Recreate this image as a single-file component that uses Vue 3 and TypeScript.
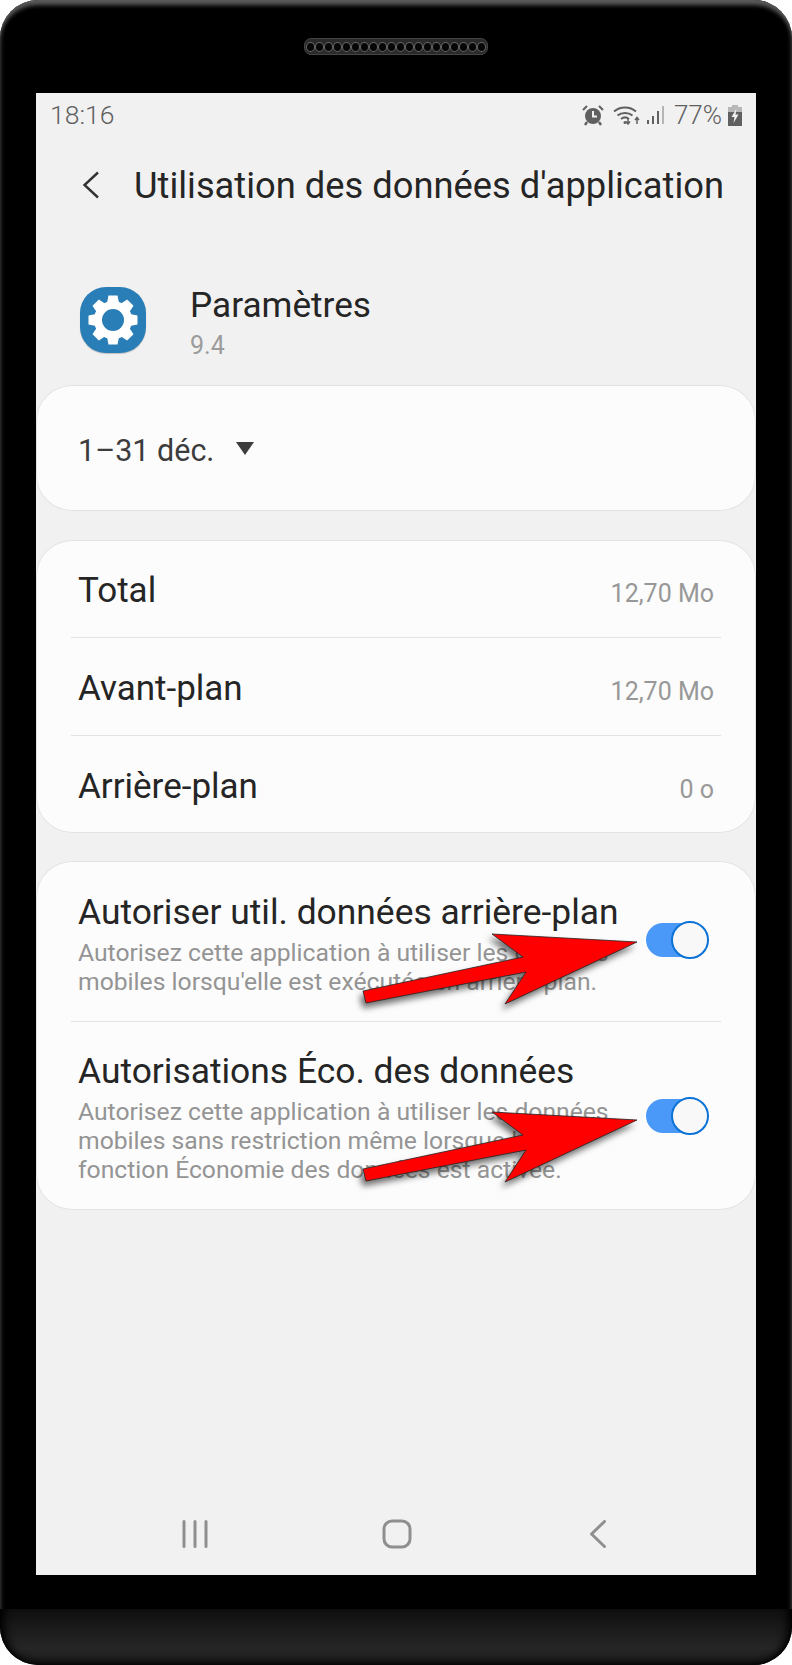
<template>
  <div class="phone">
    <div class="bezel-top">
      <div class="speaker">
        <span v-for="n in 20" :key="n" class="hole"></span>
      </div>
    </div>

    <div class="screen">
      <div class="status-bar">
        <span class="time">18:16</span>
        <div class="status-right">
          <svg class="alarm" width="22" height="21" viewBox="0 0 22 21">
            <circle cx="11" cy="11" r="8" fill="#606060" />
            <path d="M11 6v5.5h4" fill="none" stroke="#f1f1f1" stroke-width="2" />
            <path d="M1 5l4-4M21 5l-4-4" stroke="#606060" stroke-width="2" fill="none" />
            <path d="M5 17l-2 3M17 17l2 3" stroke="#606060" stroke-width="2.4" fill="none" />
          </svg>
          <svg class="wifi" width="28" height="20" viewBox="0 0 28 20">
            <path d="M1 6.5C7 1 17 1 23 6.5M4.5 10.5c4-3.5 11-3.5 15 0M8 14c2.500-2 5.500-2 8 0" fill="none" stroke="#606060" stroke-width="2" />
            <path d="M15 13.500v5M13 16.500l2 2.500 2-2.500" fill="none" stroke="#606060" stroke-width="1.500" />
            <path d="M24 19v-6M22 15l2-2.500 2 2.500" fill="none" stroke="#606060" stroke-width="1.500" />
            <circle cx="12" cy="17.500" r="1.500" fill="#606060" />
          </svg>
          <svg class="signal" width="18" height="20" viewBox="0 0 18 20">
            <rect x="0" y="15" width="2" height="4" fill="#606060" />
            <rect x="5" y="11" width="2" height="8" fill="#606060" />
            <rect x="10" y="6" width="2" height="13" fill="#606060" />
            <rect x="15" y="1" width="2" height="18" fill="#b5b5b5" />
          </svg>
          <span class="battery-text">77%</span>
          <svg class="battery" width="14" height="21" viewBox="0 0 14 21">
            <rect x="4" y="0" width="6" height="3" fill="#b8b8b8" />
            <rect x="0" y="2" width="14" height="5" fill="#b8b8b8" />
            <rect x="0" y="7" width="14" height="14" fill="#606060" />
            <path d="M8.500 3.500L3.500 12h3l-1 6 5-8.500h-3z" fill="#f1f1f1" />
          </svg>
        </div>
      </div>

      <header class="title-bar">
        <svg class="back" width="18" height="28" viewBox="0 0 18 28">
          <path d="M16 1.500L2.500 14 16 26.500" fill="none" stroke="#333" stroke-width="2.400" />
        </svg>
        <h1>Utilisation des données d'application</h1>
      </header>

      <section class="app-info">
        <div class="app-icon">
          <svg width="58" height="58" viewBox="-29 -29 58 58">
            <path
              v-for="a in toothAngles"
              :key="a"
              d="M-6-17L-4.500-24.500H4.500L6-17Z"
              fill="#fff"
              :transform="`rotate(${a})`"
            />
            <circle r="15" fill="none" stroke="#fff" stroke-width="8" />
          </svg>
        </div>
        <div class="app-text">
          <div class="app-name">Paramètres</div>
          <div class="app-version">9.4</div>
        </div>
      </section>

      <section class="card period">
        <span>1–31 déc.</span>
        <i class="caret"></i>
      </section>

      <section class="card usage">
        <div v-for="row in usageRows" :key="row.label" class="usage-row">
          <span class="usage-label">{{ row.label }}</span>
          <span class="usage-value">{{ row.value }}</span>
        </div>
      </section>

      <section class="card toggles">
        <div v-for="row in toggleRows" :key="row.title" class="toggle-row">
          <div class="toggle-text">
            <div class="toggle-title">{{ row.title }}</div>
            <p>{{ row.desc }}</p>
          </div>
          <div class="switch"><span class="knob"></span></div>
          <!-- annotation drawn over the row -->
          <svg class="arrow" width="300" height="90" viewBox="0 0 300 90">
            <polygon points="282,10 137,2 168,25 8,59 11,71 171,40 150,72" fill="#ff0000" stroke="#222" stroke-width="0.800" stroke-linejoin="round" />
          </svg>
        </div>
      </section>

      <nav class="nav-bar">
        <svg width="26" height="28" viewBox="0 0 26 28">
          <path d="M2 1.500v25M13 1.500v25M24 1.500v25" stroke="#8f8f8f" stroke-width="3" stroke-linecap="round" />
        </svg>
        <svg width="30" height="30" viewBox="0 0 30 30">
          <rect x="2" y="2" width="26" height="26" rx="8" fill="none" stroke="#8f8f8f" stroke-width="3" />
        </svg>
        <svg width="18" height="28" viewBox="0 0 18 28">
          <path d="M15.500 1.500L2.500 14l13 12.500" fill="none" stroke="#8f8f8f" stroke-width="3" stroke-linecap="round" stroke-linejoin="round" />
        </svg>
      </nav>
    </div>

    <div class="bezel-gap"></div>
    <div class="chin"></div>
  </div>
</template>

<script setup lang="ts">
interface UsageRow {
  label: string
  value: string
}

interface ToggleRow {
  title: string
  desc: string
}

const toothAngles: number[] = [0, 45, 90, 135, 180, 225, 270, 315]

const usageRows: UsageRow[] = [
  { label: 'Total', value: '12,70 Mo' },
  { label: 'Avant-plan', value: '12,70 Mo' },
  { label: 'Arrière-plan', value: '0 o' },
]

const toggleRows: ToggleRow[] = [
  {
    title: 'Autoriser util. données arrière-plan',
    desc: "Autorisez cette application à utiliser les données mobiles lorsqu'elle est exécutée en arrière-plan.",
  },
  {
    title: 'Autorisations Éco. des données',
    desc: 'Autorisez cette application à utiliser les données mobiles sans restriction même lorsque la fonction Économie des données est activée.',
  },
]
</script>

<style>
html,
body {
  margin: 0;
  background: #fff;
}
</style>

<style scoped>
.phone {
  width: 792px;
  height: 1665px;
  box-sizing: border-box;
  display: flex;
  flex-direction: column;
  align-items: stretch;
  background: #000;
  border-radius: 38px 38px 38px 38px;
  box-shadow: inset 0 7px 4px -2px #5a5a5a, inset 3px 0 4px -2px #333, inset -3px 0 4px -2px #333;
  overflow: hidden;
  font-family: Roboto, "Noto Sans", sans-serif;
}

.bezel-top {
  height: 93px;
  padding-top: 38px;
  box-sizing: border-box;
  display: flex;
  justify-content: center;
  align-items: flex-start;
}

.speaker {
  width: 184px;
  height: 17px;
  box-sizing: border-box;
  border-radius: 7px;
  background: #2a2a2a;
  border: 1px solid #444;
  display: flex;
  justify-content: center;
  align-items: center;
}

.hole {
  width: 9px;
  height: 10px;
  box-sizing: border-box;
  border-radius: 50%;
  background: #060606;
  border: 1px solid #666;
}

.screen {
  position: relative;
  margin: 0 36px;
  height: 1482px;
  background: #f1f1f1;
  display: flex;
  flex-direction: column;
}

.status-bar {
  height: 44px;
  padding: 0 14px 0 14px;
  display: flex;
  align-items: center;
  justify-content: space-between;
  color: #606060;
}

.time {
  font-size: 26.500px;
  font-weight: 300;
  margin-top: -2px;
}

.status-right {
  display: flex;
  align-items: center;
}

.wifi {
  margin-left: 9px;
}

.signal {
  margin-left: 6px;
}

.battery-text {
  margin-left: 9px;
  font-size: 26px;
  font-weight: 300;
}

.battery {
  margin-left: 6px;
}

.title-bar {
  height: 96px;
  display: flex;
  align-items: center;
  padding-left: 46px;
  margin-bottom: 43px;
}

.title-bar h1 {
  margin: 0 0 0 34px;
  font-size: 36.300px;
  font-weight: 400;
  color: #252525;
  white-space: nowrap;
}

.app-info {
  height: 109px;
  display: flex;
  padding-left: 44px;
  padding-top: 11px;
  box-sizing: border-box;
}

.app-icon {
  width: 66px;
  height: 66px;
  border-radius: 26px;
  background: #2a7eb7;
  box-shadow: 0 1px 1px rgba(0, 0, 0, 0.2);
  display: flex;
  align-items: center;
  justify-content: center;
}

.app-text {
  margin-left: 44px;
  margin-top: -5px;
}

.app-name {
  font-size: 35.200px;
  line-height: 46px;
  color: #252525;
}

.app-version {
  font-size: 25px;
  line-height: 28px;
  margin-top: 4px;
  color: #9c9c9c;
}

.card {
  background: #fcfcfc;
  border-radius: 36px;
  box-shadow: inset 0 0 0 1px #e2e2e2;
  box-sizing: border-box;
}

.period {
  height: 126px;
  padding-left: 42px;
  padding-top: 5px;
  display: flex;
  align-items: center;
  font-size: 30.500px;
  color: #3c3c3c;
}

.caret {
  margin-left: 22px;
  margin-top: -4px;
  border-left: 9px solid transparent;
  border-right: 9px solid transparent;
  border-top: 13px solid #3c3c3c;
}

.usage {
  height: 293px;
  margin-top: 29px;
  padding: 0 35px;
}

.usage-row {
  height: 98px;
  display: flex;
  align-items: center;
  justify-content: space-between;
  padding: 3px 7px 0 7px;
  box-sizing: border-box;
  border-bottom: 1px solid #e3e3e3;
}

.usage-row:last-child {
  border-bottom: none;
}

.usage-label {
  font-size: 35px;
  color: #252525;
}

.usage-value {
  font-size: 25px;
  margin-top: 6px;
  color: #989898;
}

.toggles {
  height: 349px;
  margin-top: 28px;
  padding: 0 35px;
}

.toggle-row {
  position: relative;
  padding: 30px 7px 0;
  box-sizing: border-box;
  display: flex;
  align-items: flex-start;
}

.toggle-row:first-child {
  height: 161px;
  border-bottom: 1px solid #e3e3e3;
}

.toggle-row + .toggle-row {
  padding-top: 28px;
}

.toggle-text {
  width: 545px;
}

.toggle-title {
  font-size: 35.400px;
  line-height: 42px;
  color: #252525;
  white-space: nowrap;
}

.toggle-text p {
  margin: 5px 0 0;
  font-size: 24.700px;
  line-height: 29px;
  color: #949494;
}

.switch {
  position: absolute;
  left: 575px;
  top: 62px;
  width: 58px;
  height: 34px;
  border-radius: 17px;
  background: #4a98f7;
}

.toggle-row + .toggle-row .switch {
  top: 77px;
}

.knob {
  position: absolute;
  right: -5px;
  top: -2px;
  width: 38px;
  height: 38px;
  box-sizing: border-box;
  border-radius: 50%;
  background: #f8f8f8;
  border: 2px solid #0b72d6;
}

.arrow {
  position: absolute;
  left: 284px;
  top: 71px;
  filter: drop-shadow(-3px 5px 3px rgba(0, 0, 0, 0.55));
}

.toggle-row + .toggle-row .arrow {
  top: 88px;
}

.nav-bar {
  position: absolute;
  left: 0;
  right: 0;
  top: 1426px;
  height: 30px;
  display: flex;
  align-items: center;
}

.nav-bar svg:nth-child(1) {
  margin-left: 146px;
}

.nav-bar svg:nth-child(2) {
  margin-left: 174px;
}

.nav-bar svg:nth-child(3) {
  margin-left: 177px;
}

.bezel-gap {
  height: 34px;
}

.chin {
  height: 56px;
  background: linear-gradient(#0f0f0f, #262626 70%, #1c1c1c);
  box-shadow: inset 0 -6px 8px -4px #000, inset 12px 0 10px -8px #000, inset -12px 0 10px -8px #000;
  border-radius: 0 0 38px 38px;
}
</style>
